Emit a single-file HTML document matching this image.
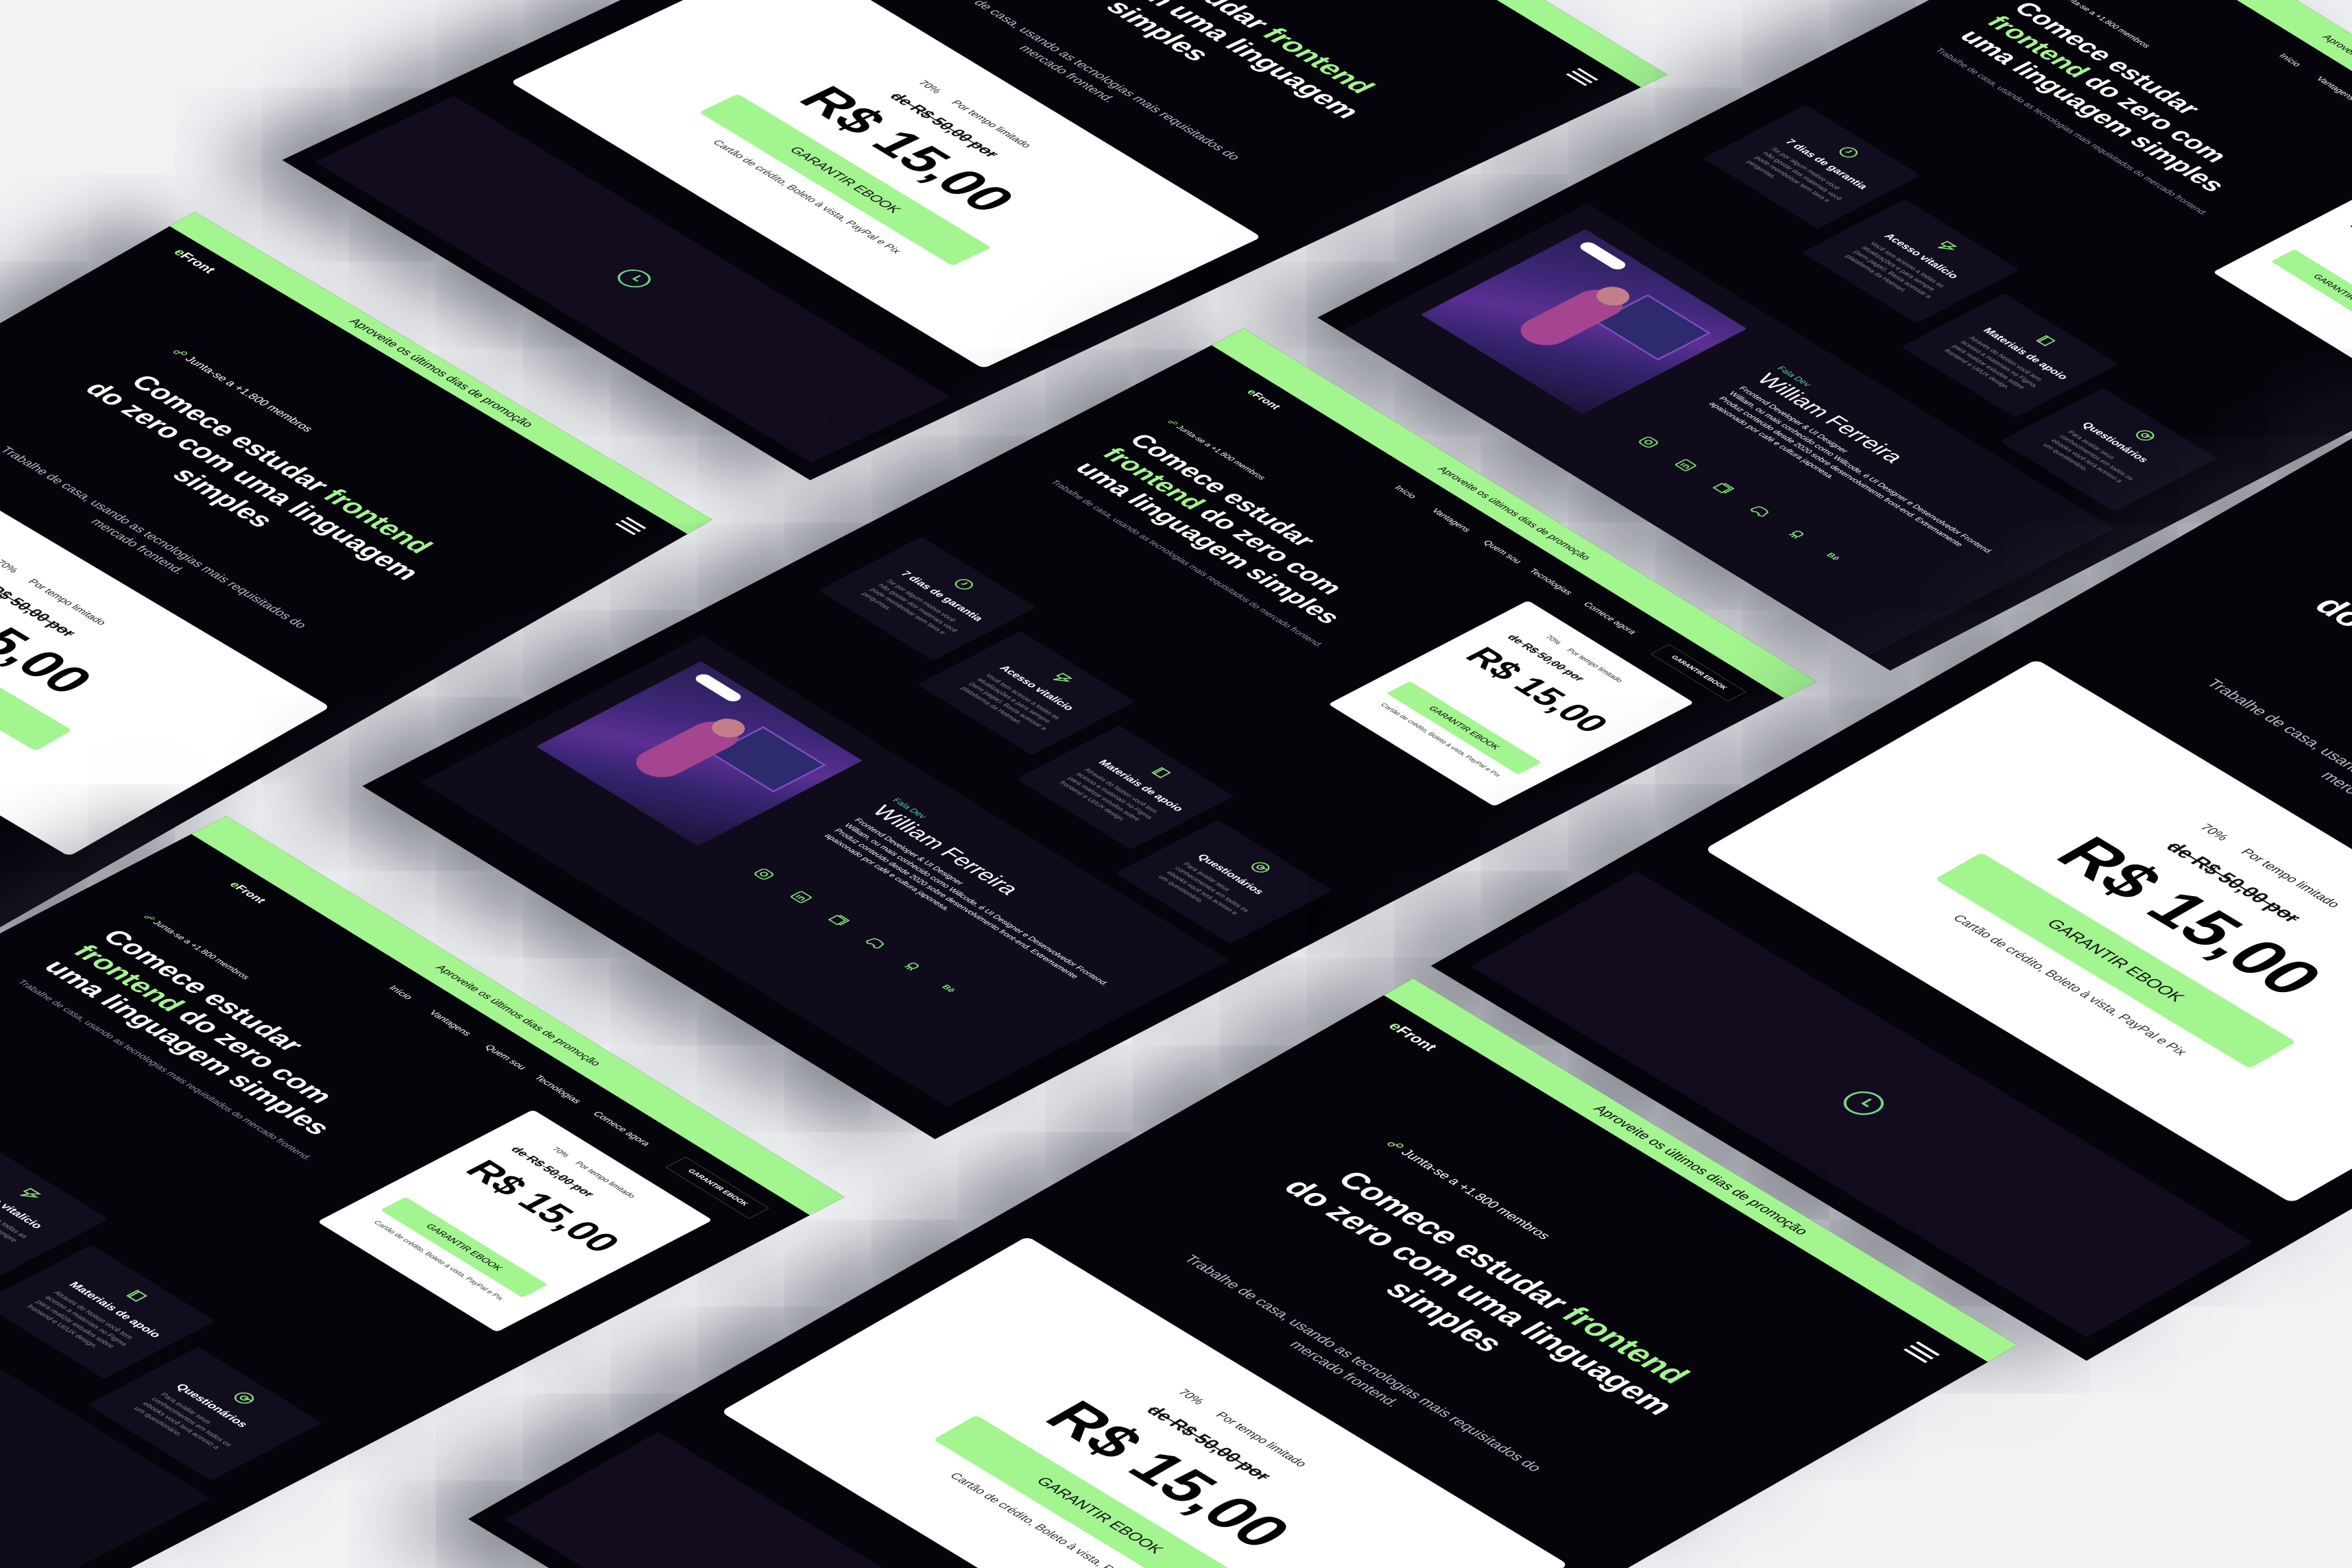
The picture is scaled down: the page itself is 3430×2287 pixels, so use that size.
<!DOCTYPE html>
<html><head><meta charset="utf-8">
<style>
*{margin:0;padding:0;box-sizing:border-box}
html,body{width:3430px;height:2287px;overflow:hidden;background:#f1f2f4}
body{font-family:"Liberation Sans",sans-serif}
#s{position:relative;width:3430px;height:2287px;overflow:hidden;contain:paint;background:#f1f2f4}
.pg{position:absolute;left:0;top:0;transform-origin:0 0;background:#05040a;overflow:hidden;box-shadow:-60px 70px 110px rgba(40,42,60,.55)}
.a{position:absolute}
.bar{position:absolute;left:0;top:0;width:100%;background:#a3f590;color:#0a0a0a;text-align:center}
.g{color:#a3f590}
.w{color:#fff}
.dk{width:1000px;height:1500px}
.mb{width:1000px;height:1540px}
.card{position:absolute;background:#120d1e;border-radius:4px}
.card h4{position:absolute;left:40px;top:62px;color:#fff;font-size:16px;font-weight:700}
.card p{position:absolute;left:40px;top:90px;width:135px;color:#8c8798;font-size:10px;line-height:14px}
.card svg{position:absolute;left:95px;top:20px}
.photo{position:absolute;background:linear-gradient(150deg,#2a1d55 0%,#3d2778 30%,#5b2f93 50%,#34246f 70%,#1c1238 100%);border-radius:3px;overflow:hidden}
.soc{position:absolute}
.nv{position:absolute;top:88px;font-size:13px;color:#fff;white-space:nowrap}
.mt{position:absolute;left:60px;top:300px;width:880px;text-align:center;font-size:46px;font-weight:700;line-height:56px;color:#fff}
.dt{position:absolute;left:80px;top:240px;width:540px;font-size:39px;font-weight:700;line-height:46px;color:#fff}
.mp{position:absolute;left:0;top:160px;width:896px;text-align:center;font-size:88px;font-weight:700;color:#000}
</style></head><body><div id="s">

<!-- B top-middle mobile -->
<div class="pg mb" style="transform:matrix(0.770,0.467,-0.812,0.384,1662,-358)">
 <div class="bar" style="height:48px;font-size:20px;line-height:48px">Aproveite os últimos dias de promoção</div>
 <div class="a w" style="left:47px;top:68px;font-size:22px;font-weight:700"><span class="g">e</span>Front</div>
 <div class="a" style="left:915px;top:78px;width:36px;height:4px;background:#fff;box-shadow:0 10px 0 #fff,0 20px 0 #fff"></div>
 <div class="a w" style="left:210px;top:235px;font-size:19px"><span class="g">☍</span> Junta-se a +1.800 membros</div>
 <div class="mt">Comece estudar <span class="g">frontend</span><br>do zero com uma linguagem<br>simples</div>
 <div class="a" style="left:180px;top:560px;width:640px;text-align:center;font-size:21px;line-height:30px;color:#b9b6c0">Trabalhe de casa, usando as tecnologias mais requisitados do mercado frontend.</div>
 <div class="a" style="left:52px;top:680px;width:896px;height:500px;background:#fff;border-radius:10px">
  <div class="a" style="left:340px;top:75px;font-size:17px;color:#222">70% &nbsp;&nbsp;&nbsp;&nbsp; Por tempo limitado</div>
  <div class="a" style="left:340px;top:118px;font-size:26px;font-weight:700;text-decoration:line-through;color:#111">de R$ 50,00 por</div>
  <div class="mp">R$ 15,00</div>
  <div class="a" style="left:210px;top:290px;width:480px;height:70px;background:#a3f590;border-radius:6px;text-align:center;line-height:70px;font-size:22px;color:#111">GARANTIR EBOOK</div>
  <div class="a" style="left:0;top:382px;width:896px;text-align:center;font-size:17px;color:#333">Cartão de crédito, Boleto à vista, PayPal e Pix</div>
 </div>
 <div class="a" style="left:30px;top:1260px;width:940px;height:250px;background:#120c1e"></div>
 <svg class="a" style="left:476px;top:1358px" width="48" height="48" viewBox="0 0 48 48"><circle cx="24" cy="24" r="20" fill="none" stroke="#6fd58a" stroke-width="3"/><path d="M24 13v12h8" fill="none" stroke="#6fd58a" stroke-width="3"/></svg>
</div>

<!-- C left mobile -->
<div class="pg mb" style="transform:matrix(0.755,0.449,-0.762,0.436,284,309)">
 <div class="bar" style="height:48px;font-size:20px;line-height:48px">Aproveite os últimos dias de promoção</div>
 <div class="a w" style="left:47px;top:68px;font-size:22px;font-weight:700"><span class="g">e</span>Front</div>
 <div class="a" style="left:915px;top:78px;width:36px;height:4px;background:#fff;box-shadow:0 10px 0 #fff,0 20px 0 #fff"></div>
 <div class="a w" style="left:210px;top:235px;font-size:19px"><span class="g">☍</span> Junta-se a +1.800 membros</div>
 <div class="mt">Comece estudar <span class="g">frontend</span><br>do zero com uma linguagem<br>simples</div>
 <div class="a" style="left:180px;top:560px;width:640px;text-align:center;font-size:21px;line-height:30px;color:#b9b6c0">Trabalhe de casa, usando as tecnologias mais requisitados do mercado frontend.</div>
 <div class="a" style="left:52px;top:680px;width:896px;height:500px;background:#fff;border-radius:10px">
  <div class="a" style="left:340px;top:75px;font-size:17px;color:#222">70% &nbsp;&nbsp;&nbsp;&nbsp; Por tempo limitado</div>
  <div class="a" style="left:340px;top:118px;font-size:26px;font-weight:700;text-decoration:line-through;color:#111">de R$ 50,00 por</div>
  <div class="mp">R$ 15,00</div>
  <div class="a" style="left:210px;top:290px;width:480px;height:70px;background:#a3f590;border-radius:6px;text-align:center;line-height:70px;font-size:22px;color:#111">GARANTIR EBOOK</div>
 </div>
</div>

<!-- D top-right desktop -->
<div class="pg dk" style="height:1380px;transform:matrix(0.835,0.515,-0.857,0.445,3104,-151)">
 <div class="bar" style="height:55px;font-size:15px;line-height:55px">Aproveite os últimos dias de promoção</div>
 <div class="a w" style="left:100px;top:80px;font-size:16px;font-weight:700"><span class="g">e</span>Front</div>
 <div class="nv" style="left:365px">Início</div><div class="nv" style="left:430px">Vantagens</div><div class="nv" style="left:520px">Quem sou</div><div class="nv" style="left:600px">Tecnologias</div><div class="nv" style="left:695px">Comece agora</div>
 <div class="a w" style="left:82px;top:200px;font-size:12px"><span class="g">☍</span> Junta-se a +1.800 membros</div>
 <div class="dt">Comece estudar<br><span class="g">frontend</span> do zero com<br>uma linguagem simples</div>
 <div class="a" style="left:82px;top:395px;width:470px;font-size:13px;line-height:19px;color:#9a96a3">Trabalhe de casa, usando as tecnologias mais requisitados do mercado frontend.</div>
 <div class="a" style="left:645px;top:145px;width:290px;height:340px;background:#fff;border-radius:6px">
  <div class="a" style="left:0;top:95px;width:290px;text-align:center;font-size:54px;font-weight:700;color:#000">R$ 15,00</div>
  <div class="a" style="left:30px;top:230px;width:230px;height:40px;background:#a3f590;border-radius:4px;text-align:center;line-height:40px;font-size:13px">GARANTIR EBOOK</div>
 </div>
 <div class="card" style="left:63px;top:610px;width:200px;height:175px"><svg width="24" height="24" viewBox="0 0 24 24"><circle cx="12" cy="12" r="10" fill="none" stroke="#8be57c" stroke-width="2"/><path d="M12 6v6l-3 2" fill="none" stroke="#8be57c" stroke-width="2"/></svg><h4>7 dias de garantia</h4><p>Se por algum motivo você não gostar dos materiais você pode reembolsar sem taxa e perguntas.</p></div>
 <div class="card" style="left:287px;top:660px;width:200px;height:175px"><svg width="24" height="24" viewBox="0 0 24 24"><path d="M4 4h14l-6 7h8L6 22l4-9H3z" fill="none" stroke="#8be57c" stroke-width="2"/></svg><h4>Acesso vitalício</h4><p>Você tem acesso a todas as atualizações e para sempre (sem pagar). Basta acessar a plataforma da Hotmart.</p></div>
 <div class="card" style="left:511px;top:710px;width:200px;height:175px"><svg width="24" height="24" viewBox="0 0 24 24"><path d="M4 4h14v16H4zM7 4v16" fill="none" stroke="#8be57c" stroke-width="2"/></svg><h4>Materiais de apoio</h4><p>Através do Notion você tem acesso a materiais no Figma para realizar estudos sobre frontend e UI/UX design.</p></div>
 <div class="card" style="left:735px;top:760px;width:200px;height:175px"><svg width="24" height="24" viewBox="0 0 24 24"><circle cx="12" cy="12" r="10" fill="none" stroke="#8be57c" stroke-width="2"/><circle cx="12" cy="12" r="4" fill="none" stroke="#8be57c" stroke-width="2"/><path d="M12 12l9-3" stroke="#8be57c" stroke-width="2"/></svg><h4>Questionários</h4><p>Para avaliar seus conhecimentos em todos os ebooks você terá acesso a um questionário.</p></div>
 <div class="a" style="left:40px;top:960px;width:920px;height:420px;background:#100b1a"></div>
 <div class="photo" style="left:78px;top:1000px;width:282px;height:280px"><div class="a" style="left:150px;top:40px;width:110px;height:90px;background:#2d2a6e;border:3px solid #7a4fc0"></div><div class="a" style="left:95px;top:70px;width:60px;height:150px;background:#a5448f;border-radius:30px"></div><div class="a" style="left:105px;top:55px;width:40px;height:40px;background:#c27f8a;border-radius:50%"></div><div class="a" style="left:20px;top:14px;width:70px;height:20px;background:#fff;border-radius:10px"></div></div>
 <div class="a" style="left:445px;top:1020px;font-size:13px;color:#4fd1b0">Fala Dev</div>
 <div class="a w" style="left:445px;top:1038px;font-size:34px">William Ferreira</div>
 <div class="a w" style="left:445px;top:1085px;width:480px;font-size:12px;line-height:17px">Frontend Developer &amp; UI Designer<br>William, ou mais conhecido como Willcode, é UI Designer e Desenvolvedor Frontend. Produz conteúdo desde 2020 sobre desenvolvimento front-end. Extremamente apaixonado por café e cultura japonesa.</div>
 <svg class="soc" style="left:445px;top:1250px" width="22" height="22" viewBox="0 0 22 22"><rect x="2" y="2" width="18" height="18" rx="5" fill="none" stroke="#7ee07a" stroke-width="2"/><circle cx="11" cy="11" r="4" fill="none" stroke="#7ee07a" stroke-width="2"/></svg>
 <svg class="soc" style="left:510px;top:1250px" width="22" height="22" viewBox="0 0 22 22"><rect x="2" y="2" width="18" height="18" rx="2" fill="none" stroke="#7ee07a" stroke-width="2"/><path d="M7 9v7M11 9v7M11 12c0-3 5-3 5 0v4" fill="none" stroke="#7ee07a" stroke-width="2"/></svg>
 <svg class="soc" style="left:575px;top:1250px" width="22" height="22" viewBox="0 0 22 22"><path d="M3 5h14v14H3zM6 5V2h14v14h-3" fill="none" stroke="#7ee07a" stroke-width="2"/></svg>
 <svg class="soc" style="left:640px;top:1250px" width="22" height="22" viewBox="0 0 22 22"><path d="M3 6c4-3 12-3 16 0l2 10c-3 3-5 3-6 2l-1-2H8l-1 2c-1 1-3 1-6-2z" fill="none" stroke="#7ee07a" stroke-width="2"/></svg>
 <svg class="soc" style="left:705px;top:1250px" width="22" height="22" viewBox="0 0 22 22"><path d="M6 8c0-4 10-4 10 0v5c0 3-10 3-10 0zM8 15l-2 5M14 15l2 5M11 16v5" fill="none" stroke="#7ee07a" stroke-width="2"/></svg>
 <svg class="soc" style="left:770px;top:1250px" width="22" height="22" viewBox="0 0 22 22"><text x="1" y="16" font-size="13" font-weight="700" fill="#7ee07a" font-family="Liberation Sans">Bē</text></svg>
</div>

<!-- A center desktop -->
<div class="pg dk" style="transform:matrix(0.835,0.515,-0.857,0.445,1814,479)">
 <div class="bar" style="height:55px;font-size:15px;line-height:55px">Aproveite os últimos dias de promoção</div>
 <div class="a w" style="left:100px;top:80px;font-size:16px;font-weight:700"><span class="g">e</span>Front</div>
 <div class="nv" style="left:365px">Início</div><div class="nv" style="left:430px">Vantagens</div><div class="nv" style="left:520px">Quem sou</div><div class="nv" style="left:600px">Tecnologias</div><div class="nv" style="left:695px">Comece agora</div>
 <div class="a w" style="left:825px;top:80px;width:135px;height:32px;border:1px solid #3a4a2a;font-size:10px;font-weight:700;text-align:center;line-height:30px">GARANTIR EBOOK</div>
 <div class="a w" style="left:82px;top:200px;font-size:12px"><span class="g">☍</span> Junta-se a +1.800 membros</div>
 <div class="dt">Comece estudar<br><span class="g">frontend</span> do zero com<br>uma linguagem simples</div>
 <div class="a" style="left:82px;top:395px;width:470px;font-size:13px;line-height:19px;color:#9a96a3">Trabalhe de casa, usando as tecnologias mais requisitados do mercado frontend.</div>
 <div class="a" style="left:645px;top:145px;width:290px;height:340px;background:#fff;border-radius:6px">
  <div class="a" style="left:70px;top:30px;font-size:11px;color:#222">70% &nbsp;&nbsp;&nbsp; Por tempo limitado</div>
  <div class="a" style="left:40px;top:60px;font-size:17px;font-weight:700;text-decoration:line-through;color:#111">de R$ 50,00 por</div>
  <div class="a" style="left:0;top:95px;width:290px;text-align:center;font-size:54px;font-weight:700;color:#000">R$ 15,00</div>
  <div class="a" style="left:30px;top:230px;width:230px;height:40px;background:#a3f590;border-radius:4px;text-align:center;line-height:40px;font-size:13px">GARANTIR EBOOK</div>
  <div class="a" style="left:0;top:285px;width:290px;text-align:center;font-size:10px;color:#333">Cartão de crédito, Boleto à vista, PayPal e Pix</div>
 </div>
 <div class="card" style="left:63px;top:610px;width:200px;height:175px"><svg width="24" height="24" viewBox="0 0 24 24"><circle cx="12" cy="12" r="10" fill="none" stroke="#8be57c" stroke-width="2"/><path d="M12 6v6l-3 2" fill="none" stroke="#8be57c" stroke-width="2"/></svg><h4>7 dias de garantia</h4><p>Se por algum motivo você não gostar dos materiais você pode reembolsar sem taxa e perguntas.</p></div>
 <div class="card" style="left:287px;top:660px;width:200px;height:175px"><svg width="24" height="24" viewBox="0 0 24 24"><path d="M4 4h14l-6 7h8L6 22l4-9H3z" fill="none" stroke="#8be57c" stroke-width="2"/></svg><h4>Acesso vitalício</h4><p>Você tem acesso a todas as atualizações e para sempre (sem pagar). Basta acessar a plataforma da Hotmart.</p></div>
 <div class="card" style="left:511px;top:710px;width:200px;height:175px"><svg width="24" height="24" viewBox="0 0 24 24"><path d="M4 4h14v16H4zM7 4v16" fill="none" stroke="#8be57c" stroke-width="2"/></svg><h4>Materiais de apoio</h4><p>Através do Notion você tem acesso a materiais no Figma para realizar estudos sobre frontend e UI/UX design.</p></div>
 <div class="card" style="left:735px;top:760px;width:200px;height:175px"><svg width="24" height="24" viewBox="0 0 24 24"><circle cx="12" cy="12" r="10" fill="none" stroke="#8be57c" stroke-width="2"/><circle cx="12" cy="12" r="4" fill="none" stroke="#8be57c" stroke-width="2"/><path d="M12 12l9-3" stroke="#8be57c" stroke-width="2"/></svg><h4>Questionários</h4><p>Para avaliar seus conhecimentos em todos os ebooks você terá acesso a um questionário.</p></div>
 <div class="a" style="left:40px;top:960px;width:920px;height:480px;background:#100b1a"></div>
 <div class="photo" style="left:78px;top:1000px;width:282px;height:280px"><div class="a" style="left:150px;top:40px;width:110px;height:90px;background:#2d2a6e;border:3px solid #7a4fc0"></div><div class="a" style="left:95px;top:70px;width:60px;height:150px;background:#a5448f;border-radius:30px"></div><div class="a" style="left:105px;top:55px;width:40px;height:40px;background:#c27f8a;border-radius:50%"></div><div class="a" style="left:20px;top:14px;width:70px;height:20px;background:#fff;border-radius:10px"></div></div>
 <div class="a" style="left:445px;top:1020px;font-size:13px;color:#4fd1b0">Fala Dev</div>
 <div class="a w" style="left:445px;top:1038px;font-size:34px">William Ferreira</div>
 <div class="a w" style="left:445px;top:1085px;width:480px;font-size:12px;line-height:17px">Frontend Developer &amp; UI Designer<br>William, ou mais conhecido como Willcode, é UI Designer e Desenvolvedor Frontend. Produz conteúdo desde 2020 sobre desenvolvimento front-end. Extremamente apaixonado por café e cultura japonesa.</div>
 <svg class="soc" style="left:445px;top:1250px" width="22" height="22" viewBox="0 0 22 22"><rect x="2" y="2" width="18" height="18" rx="5" fill="none" stroke="#7ee07a" stroke-width="2"/><circle cx="11" cy="11" r="4" fill="none" stroke="#7ee07a" stroke-width="2"/></svg>
 <svg class="soc" style="left:510px;top:1250px" width="22" height="22" viewBox="0 0 22 22"><rect x="2" y="2" width="18" height="18" rx="2" fill="none" stroke="#7ee07a" stroke-width="2"/><path d="M7 9v7M11 9v7M11 12c0-3 5-3 5 0v4" fill="none" stroke="#7ee07a" stroke-width="2"/></svg>
 <svg class="soc" style="left:575px;top:1250px" width="22" height="22" viewBox="0 0 22 22"><path d="M3 5h14v14H3zM6 5V2h14v14h-3" fill="none" stroke="#7ee07a" stroke-width="2"/></svg>
 <svg class="soc" style="left:640px;top:1250px" width="22" height="22" viewBox="0 0 22 22"><path d="M3 6c4-3 12-3 16 0l2 10c-3 3-5 3-6 2l-1-2H8l-1 2c-1 1-3 1-6-2z" fill="none" stroke="#7ee07a" stroke-width="2"/></svg>
 <svg class="soc" style="left:705px;top:1250px" width="22" height="22" viewBox="0 0 22 22"><path d="M6 8c0-4 10-4 10 0v5c0 3-10 3-10 0zM8 15l-2 5M14 15l2 5M11 16v5" fill="none" stroke="#7ee07a" stroke-width="2"/></svg>
 <svg class="soc" style="left:770px;top:1250px" width="22" height="22" viewBox="0 0 22 22"><text x="1" y="16" font-size="13" font-weight="700" fill="#7ee07a" font-family="Liberation Sans">Bē</text></svg>
</div>

<!-- E bottom-left desktop -->
<div class="pg dk" style="transform:matrix(0.902,0.556,-0.926,0.481,330,1190)">
 <div class="bar" style="height:55px;font-size:15px;line-height:55px">Aproveite os últimos dias de promoção</div>
 <div class="a w" style="left:100px;top:80px;font-size:16px;font-weight:700"><span class="g">e</span>Front</div>
 <div class="nv" style="left:365px">Início</div><div class="nv" style="left:430px">Vantagens</div><div class="nv" style="left:520px">Quem sou</div><div class="nv" style="left:600px">Tecnologias</div><div class="nv" style="left:695px">Comece agora</div>
 <div class="a w" style="left:825px;top:80px;width:135px;height:32px;border:1px solid #3a4a2a;font-size:10px;font-weight:700;text-align:center;line-height:30px">GARANTIR EBOOK</div>
 <div class="a w" style="left:82px;top:200px;font-size:12px"><span class="g">☍</span> Junta-se a +1.800 membros</div>
 <div class="dt">Comece estudar<br><span class="g">frontend</span> do zero com<br>uma linguagem simples</div>
 <div class="a" style="left:82px;top:395px;width:470px;font-size:13px;line-height:19px;color:#9a96a3">Trabalhe de casa, usando as tecnologias mais requisitados do mercado frontend.</div>
 <div class="a" style="left:645px;top:145px;width:290px;height:340px;background:#fff;border-radius:6px">
  <div class="a" style="left:70px;top:30px;font-size:11px;color:#222">70% &nbsp;&nbsp;&nbsp; Por tempo limitado</div>
  <div class="a" style="left:40px;top:60px;font-size:17px;font-weight:700;text-decoration:line-through;color:#111">de R$ 50,00 por</div>
  <div class="a" style="left:0;top:95px;width:290px;text-align:center;font-size:54px;font-weight:700;color:#000">R$ 15,00</div>
  <div class="a" style="left:30px;top:230px;width:230px;height:40px;background:#a3f590;border-radius:4px;text-align:center;line-height:40px;font-size:13px">GARANTIR EBOOK</div>
  <div class="a" style="left:0;top:285px;width:290px;text-align:center;font-size:10px;color:#333">Cartão de crédito, Boleto à vista, PayPal e Pix</div>
 </div>
 <div class="card" style="left:63px;top:610px;width:200px;height:175px"><svg width="24" height="24" viewBox="0 0 24 24"><circle cx="12" cy="12" r="10" fill="none" stroke="#8be57c" stroke-width="2"/><path d="M12 6v6l-3 2" fill="none" stroke="#8be57c" stroke-width="2"/></svg><h4>7 dias de garantia</h4><p>Se por algum motivo você não gostar dos materiais você pode reembolsar sem taxa e perguntas.</p></div>
 <div class="card" style="left:287px;top:660px;width:200px;height:175px"><svg width="24" height="24" viewBox="0 0 24 24"><path d="M4 4h14l-6 7h8L6 22l4-9H3z" fill="none" stroke="#8be57c" stroke-width="2"/></svg><h4>Acesso vitalício</h4><p>Você tem acesso a todas as atualizações e para sempre (sem pagar).</p></div>
 <div class="card" style="left:511px;top:710px;width:200px;height:175px"><svg width="24" height="24" viewBox="0 0 24 24"><path d="M4 4h14v16H4zM7 4v16" fill="none" stroke="#8be57c" stroke-width="2"/></svg><h4>Materiais de apoio</h4><p>Através do Notion você tem acesso a materiais no Figma para realizar estudos sobre frontend e UI/UX design.</p></div>
 <div class="card" style="left:735px;top:760px;width:200px;height:175px"><svg width="24" height="24" viewBox="0 0 24 24"><circle cx="12" cy="12" r="10" fill="none" stroke="#8be57c" stroke-width="2"/><circle cx="12" cy="12" r="4" fill="none" stroke="#8be57c" stroke-width="2"/><path d="M12 12l9-3" stroke="#8be57c" stroke-width="2"/></svg><h4>Questionários</h4><p>Para avaliar seus conhecimentos em todos os ebooks você terá acesso a um questionário.</p></div>
 <div class="a" style="left:40px;top:960px;width:920px;height:480px;background:#100b1a"></div>
</div>

<!-- G right mobile -->
<div class="pg mb" style="transform:matrix(0.956,0.576,-0.969,0.555,3579,554)">
 <div class="bar" style="height:48px;font-size:20px;line-height:48px">Aproveite os últimos dias de promoção</div>
 <div class="mt">Comece estudar <span class="g">frontend</span><br>do zero com uma linguagem<br>simples</div>
 <div class="a" style="left:180px;top:560px;width:640px;text-align:center;font-size:21px;line-height:30px;color:#b9b6c0">Trabalhe de casa, usando as tecnologias mais requisitados do mercado frontend.</div>
 <div class="a" style="left:52px;top:680px;width:896px;height:500px;background:#fff;border-radius:10px">
  <div class="a" style="left:340px;top:75px;font-size:17px;color:#222">70% &nbsp;&nbsp;&nbsp;&nbsp; Por tempo limitado</div>
  <div class="a" style="left:340px;top:118px;font-size:26px;font-weight:700;text-decoration:line-through;color:#111">de R$ 50,00 por</div>
  <div class="mp">R$ 15,00</div>
  <div class="a" style="left:210px;top:290px;width:480px;height:70px;background:#a3f590;border-radius:6px;text-align:center;line-height:70px;font-size:22px;color:#111">GARANTIR EBOOK</div>
  <div class="a" style="left:0;top:382px;width:896px;text-align:center;font-size:17px;color:#333">Cartão de crédito, Boleto à vista, PayPal e Pix</div>
 </div>
 <div class="a" style="left:30px;top:1260px;width:940px;height:250px;background:#120c1e"></div>
 <svg class="a" style="left:476px;top:1358px" width="48" height="48" viewBox="0 0 48 48"><circle cx="24" cy="24" r="20" fill="none" stroke="#6fd58a" stroke-width="3"/><path d="M24 13v12h8" fill="none" stroke="#6fd58a" stroke-width="3"/></svg>
</div>

<!-- F bottom-center mobile -->
<div class="pg mb" style="transform:matrix(0.881,0.535,-0.895,0.512,2061,1427)">
 <div class="bar" style="height:48px;font-size:20px;line-height:48px">Aproveite os últimos dias de promoção</div>
 <div class="a w" style="left:47px;top:68px;font-size:22px;font-weight:700"><span class="g">e</span>Front</div>
 <div class="a" style="left:915px;top:78px;width:36px;height:4px;background:#fff;box-shadow:0 10px 0 #fff,0 20px 0 #fff"></div>
 <div class="a w" style="left:210px;top:235px;font-size:19px"><span class="g">☍</span> Junta-se a +1.800 membros</div>
 <div class="mt">Comece estudar <span class="g">frontend</span><br>do zero com uma linguagem<br>simples</div>
 <div class="a" style="left:180px;top:560px;width:640px;text-align:center;font-size:21px;line-height:30px;color:#b9b6c0">Trabalhe de casa, usando as tecnologias mais requisitados do mercado frontend.</div>
 <div class="a" style="left:52px;top:680px;width:896px;height:500px;background:#fff;border-radius:10px">
  <div class="a" style="left:340px;top:75px;font-size:17px;color:#222">70% &nbsp;&nbsp;&nbsp;&nbsp; Por tempo limitado</div>
  <div class="a" style="left:340px;top:118px;font-size:26px;font-weight:700;text-decoration:line-through;color:#111">de R$ 50,00 por</div>
  <div class="mp">R$ 15,00</div>
  <div class="a" style="left:210px;top:290px;width:480px;height:70px;background:#a3f590;border-radius:6px;text-align:center;line-height:70px;font-size:22px;color:#111">GARANTIR EBOOK</div>
  <div class="a" style="left:0;top:382px;width:896px;text-align:center;font-size:17px;color:#333">Cartão de crédito, Boleto à vista, PayPal e Pix</div>
 </div>
 <div class="a" style="left:30px;top:1260px;width:940px;height:250px;background:#120c1e"></div>
</div>

</div></body></html>
